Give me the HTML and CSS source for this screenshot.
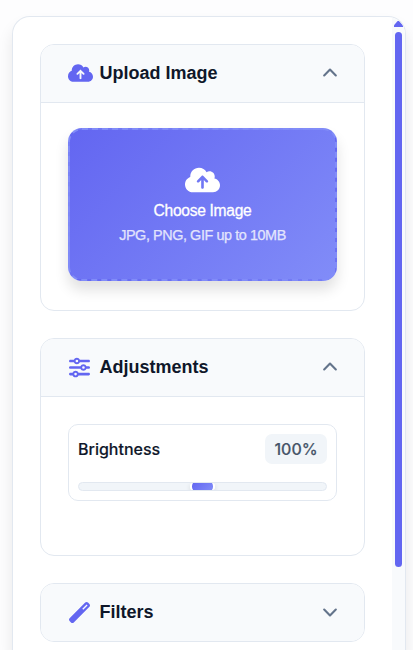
FILE: index.html
```html
<!DOCTYPE html>
<html lang="en">
<head>
<meta charset="utf-8">
<title>Image Editor</title>
<link rel="stylesheet" href="styles.css">
</head>
<body>
<aside class="panel">
  <div class="panel-content">
    <section class="section">
      <header class="section-header">
        <svg class="icon" viewBox="0 0 640 512"><path d="M144 480C64.500 480 0 415.500 0 336c0-62.800 40.200-116.200 96.200-135.900c-.1-2.700-.2-5.400-.2-8.100c0-88.400 71.600-160 160-160c59.300 0 111 32.200 138.700 80.200C409.900 102 428.300 96 448 96c53 0 96 43 96 96c0 12.200-2.300 23.800-6.400 34.600C596 238.400 640 290.100 640 352c0 70.700-57.300 128-128 128H144zm79-217c-9.400 9.400-9.400 24.600 0 33.900s24.600 9.400 33.900 0l39-39V392c0 13.300 10.700 24 24 24s24-10.700 24-24V257.900l39 39c9.400 9.400 24.600 9.400 33.900 0s9.400-24.600 0-33.900l-80-80c-9.400-9.400-24.600-9.400-33.900 0l-80 80z"/></svg>
        <h2 class="title">Upload Image</h2>
        <svg class="chevron" viewBox="0 0 14 9"><path d="M1.200 7.400 7 1.600l5.800 5.800"/></svg>
      </header>
      <div class="section-body">
        <label class="upload">
          <svg class="upload-icon" viewBox="0 0 640 512"><path d="M144 480C64.500 480 0 415.500 0 336c0-62.800 40.200-116.200 96.200-135.900c-.1-2.700-.2-5.400-.2-8.100c0-88.400 71.600-160 160-160c59.300 0 111 32.200 138.700 80.200C409.900 102 428.300 96 448 96c53 0 96 43 96 96c0 12.200-2.300 23.800-6.400 34.600C596 238.400 640 290.100 640 352c0 70.700-57.300 128-128 128H144zm79-217c-9.400 9.400-9.400 24.600 0 33.900s24.600 9.400 33.900 0l39-39V392c0 13.300 10.700 24 24 24s24-10.700 24-24V257.900l39 39c9.400 9.400 24.600 9.400 33.900 0s9.400-24.600 0-33.900l-80-80c-9.400-9.400-24.600-9.400-33.900 0l-80 80z"/></svg>
          <span class="upload-title">Choose Image</span>
          <span class="upload-hint">JPG, PNG, GIF up to 10MB</span>
        </label>
      </div>
    </section>

    <section class="section">
      <header class="section-header">
        <svg class="icon icon-square" viewBox="0 0 512 512"><path d="M0 416c0 17.700 14.300 32 32 32l54.700 0c12.300 28.300 40.500 48 73.300 48s61-19.700 73.300-48L480 448c17.700 0 32-14.300 32-32s-14.300-32-32-32l-246.700 0c-12.300-28.300-40.500-48-73.300-48s-61 19.700-73.300 48L32 384c-17.700 0-32 14.300-32 32zm128 0a32 32 0 1 1 64 0 32 32 0 1 1 -64 0zM320 256a32 32 0 1 1 64 0 32 32 0 1 1 -64 0zm32-80c-32.800 0-61 19.700-73.300 48L32 224c-17.700 0-32 14.300-32 32s14.300 32 32 32l246.700 0c12.300 28.300 40.500 48 73.300 48s61-19.700 73.300-48l54.700 0c17.700 0 32-14.300 32-32s-14.300-32-32-32l-54.700 0c-12.300-28.300-40.500-48-73.300-48zM192 128a32 32 0 1 1 0-64 32 32 0 1 1 0 64zm73.300-64C253 35.700 224.800 16 192 16s-61 19.700-73.300 48L32 64C14.300 64 0 78.300 0 96s14.300 32 32 32l86.700 0c12.300 28.300 40.500 48 73.300 48s61-19.700 73.300-48L480 128c17.700 0 32-14.300 32-32s-14.300-32-32-32L265.300 64z"/></svg>
        <h2 class="title">Adjustments</h2>
        <svg class="chevron" viewBox="0 0 14 9"><path d="M1.200 7.400 7 1.600l5.800 5.800"/></svg>
      </header>
      <div class="section-body adjustments">
        <div class="control">
          <div class="control-row">
            <span class="control-label">Brightness</span>
            <span class="control-value">100%</span>
          </div>
          <div class="slider"><div class="slider-thumb"></div></div>
        </div>
      </div>
    </section>

    <section class="section">
      <header class="section-header collapsed">
        <svg class="icon icon-square" viewBox="0 0 512 512"><path d="M14.100 463.300c-18.700-18.700-18.700-49.100 0-67.900L395.400 14.100c18.700-18.700 49.100-18.700 67.900 0l34.600 34.600c18.700 18.700 18.700 49.100 0 67.900L116.500 497.900c-18.700 18.700-49.100 18.700-67.900 0L14.100 463.300zM347.600 187.600l105-105L429.300 59.300l-105 105 23.300 23.300z"/></svg>
        <h2 class="title">Filters</h2>
        <svg class="chevron" viewBox="0 0 14 9"><path d="M1.200 1.600 7 7.400l5.800-5.800"/></svg>
      </header>
    </section>
  </div>
  <div class="scrollbar">
    <div class="scroll-arrow"></div>
    <div class="scroll-thumb"></div>
  </div>
</aside>
</body>
</html>
```
FILE: styles.css
```css
* {
  box-sizing: border-box;
}

body {
  margin: 0;
  height: 650px;
  padding: 16px 7px 0 12px;
  overflow: hidden;
  background: #fdfdfe;
  font-family: "Liberation Sans", Arial, sans-serif;
  color: #0f172a;
}

.panel {
  display: flex;
  height: 634px;
  border: 1px solid #e2e8f0;
  border-bottom: 0;
  border-radius: 18px 18px 0 0;
  overflow: hidden;
  background: #fff;
  box-shadow: 0 10px 16px rgba(0, 0, 0, 0.09);
}

.panel-content {
  flex: 1;
  display: flex;
  flex-direction: column;
  gap: 27px;
  padding: 27px 27px 0;
}

.section {
  flex-shrink: 0;
  border: 1px solid #e2e8f0;
  border-radius: 14px;
  overflow: hidden;
  background: #fff;
}

.section-header {
  display: flex;
  align-items: center;
  height: 58px;
  padding: 0 27px;
  border-bottom: 1px solid #e2e8f0;
  background: #f8fafc;
}

.section-header.collapsed {
  height: 57px;
  border-bottom: 0;
}

.icon {
  width: 25px;
  height: 20px;
  margin: 0 6.5px 1px 0;
  fill: #6366f1;
}

.icon-square {
  width: 21px;
  height: 21px;
  margin: 0 9.5px 1px 1px;
}

.title {
  margin: 0;
  padding-bottom: 2px;
  font-size: 18px;
  font-weight: 700;
  line-height: 22px;
}

.chevron {
  width: 14px;
  height: 9px;
  margin: 0 0.5px 2px auto;
  fill: none;
  stroke: #64748b;
  stroke-width: 2.1;
  stroke-linecap: round;
  stroke-linejoin: round;
}

.collapsed .chevron {
  margin-bottom: 0;
}

.section-body {
  padding: 25px 27px 29px;
}

.upload {
  display: flex;
  flex-direction: column;
  align-items: center;
  height: 153px;
  padding-top: 36px;
  border: 2px dashed #818cf8;
  border-radius: 14px;
  background: linear-gradient(135deg, #6366f1, #818cf8);
  box-shadow: 0 9px 14px rgba(0, 0, 0, 0.12);
  color: #fff;
}

.upload-icon {
  width: 35px;
  height: 28px;
  fill: #fff;
}

.upload-title {
  margin-top: 6px;
  font-size: 15.6px;
  line-height: 22px;
  letter-spacing: -0.3px;
  -webkit-text-stroke: 0.3px #fff;
}

.upload-hint {
  margin-top: 3px;
  font-size: 14.4px;
  line-height: 20px;
  letter-spacing: -0.42px;
  opacity: 0.8;
  -webkit-text-stroke: 0.25px #fff;
}

.adjustments {
  height: 158px;
  padding-top: 27px;
}

.control {
  height: 77px;
  padding: 9px;
  border: 1px solid #e2e8f0;
  border-radius: 10px;
  font-family: Inter, sans-serif;
}

.control-row {
  display: flex;
  align-items: center;
  justify-content: space-between;
  height: 30px;
  margin-bottom: 18px;
}

.control-label {
  font-size: 16px;
  font-weight: 500;
  -webkit-text-stroke: 0.15px #0f172a;
}

.control-value {
  width: 62px;
  border-radius: 7px;
  background: #f1f5f9;
  color: #475569;
  font-size: 16px;
  font-weight: 500;
  line-height: 30px;
  text-align: center;
  -webkit-text-stroke: 0.15px #475569;
}

.slider {
  display: flex;
  justify-content: center;
  height: 9px;
  border: 1px solid #e2e8f0;
  border-radius: 5px;
  overflow: hidden;
  background: #f1f5f9;
}

.slider-thumb {
  width: 25px;
  height: 7px;
  border: 2px solid #fff;
  border-width: 0 2px;
  border-radius: 3px;
  background: linear-gradient(135deg, #6366f1, #818cf8) padding-box;
  box-shadow: 0 2px 5px rgba(0, 0, 0, 0.12);
}

.scrollbar {
  display: flex;
  flex-direction: column;
  align-items: center;
  width: 13px;
  padding-top: 4px;
  background: #f8fafc;
}

.scroll-arrow {
  width: 9px;
  height: 6px;
  background: #6366f1;
  clip-path: polygon(40% 0, 60% 0, 100% 70%, 100% 100%, 0 100%, 0 70%);
}

.scroll-thumb {
  width: 7px;
  height: 535px;
  margin-top: 5px;
  border-radius: 4px;
  background: #6366f1;
}
```
